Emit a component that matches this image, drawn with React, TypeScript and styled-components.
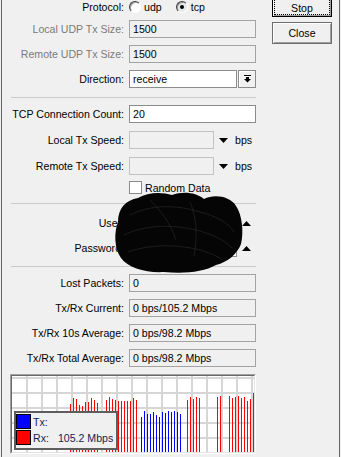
import styled, { createGlobalStyle } from 'styled-components';

const GlobalStyle = createGlobalStyle`
  html, body {
    margin: 0;
    padding: 0;
    background: #f0f0f0;
  }
  body {
    font-family: "Liberation Sans", Arial, sans-serif;
    font-size: 10.6px;
    color: #000;
  }
  * { box-sizing: border-box; }
`;

const Frame = styled.div`
  position: relative;
  width: 341px;
  height: 457px;
  padding: 0 1px;
  overflow: hidden;
  background: #f0f0f0;
`;

const Window = styled.div`
  height: 100%;
  display: flex;
  border-left: 1px solid #646464;
  border-right: 1px solid #646464;
`;

const MainPanel = styled.div`
  width: 246px;
  margin-left: 8px;
  display: flex;
  flex-direction: column;
`;

const Section = styled.div<{ $gap: number }>`
  display: flex;
  flex-direction: column;
  gap: ${p => p.$gap}px;
`;

const Separator = styled.div<{ $top: number; $bottom: number }>`
  height: 1px;
  margin: ${p => p.$top}px 0 ${p => p.$bottom}px 1px;
  background: #cacaca;
`;

const Row = styled.div<{ $h?: number }>`
  display: grid;
  grid-template-columns: 114px 1fr;
  column-gap: 5px;
  align-items: center;
  height: ${p => p.$h ?? 18}px;
`;

const Label = styled.span<{ $disabled?: boolean }>`
  text-align: right;
  white-space: nowrap;
  color: ${p => (p.$disabled ? '#7a7a7a' : '#000')};
`;

const Controls = styled.div<{ $gap?: number }>`
  display: flex;
  align-items: center;
  gap: ${p => p.$gap ?? 4}px;
`;

type FieldKind = 'edit' | 'readonly' | 'disabled';

const fieldColors: Record<FieldKind, { bg: string; border: string }> = {
  edit: { bg: '#ffffff', border: '#8c8c8c' },
  readonly: { bg: '#f0f0f0', border: '#a3a3a3' },
  disabled: { bg: '#f0f0f0', border: '#c2c2c2' },
};

const Field = styled.div<{ $kind: FieldKind; $width?: number }>`
  width: ${p => (p.$width ? `${p.$width}px` : '100%')};
  height: 18px;
  padding: 0 3px;
  display: flex;
  align-items: center;
  white-space: nowrap;
  background: ${p => fieldColors[p.$kind].bg};
  border: 1px solid ${p => fieldColors[p.$kind].border};
`;

const DropButton = styled.div`
  width: 18px;
  height: 18px;
  display: flex;
  align-items: center;
  justify-content: center;
  background: #f0f0f0;
  border: 1px solid #8a8a8a;
  box-shadow: inset 1px 1px #fff;
`;

const Radio = styled.span<{ $checked?: boolean }>`
  width: 12px;
  height: 12px;
  border-radius: 50%;
  display: inline-flex;
  align-items: center;
  justify-content: center;
  border: 1px solid;
  border-color: #3c3c3c #ffffff #ffffff #3c3c3c;
  background: ${p => (p.$checked ? '#e8e8e8' : '#fff')};
  box-shadow: inset 1px 1px #a0a0a0;
  &::after {
    content: '';
    width: 4px;
    height: 4px;
    border-radius: 50%;
    background: ${p => (p.$checked ? '#000' : 'transparent')};
  }
`;

const RadioText = styled.span`
  margin: 0 14px 0 3px;
`;

const CheckRow = styled(Row)`
  margin-top: -2px;
`;

const CheckBox = styled.span`
  width: 13px;
  height: 13px;
  background: #fff;
  border: 1px solid #8a8a8a;
`;

const Unit = styled.span`
  margin-left: 2px;
`;

const ButtonColumn = styled.div`
  width: 60px;
  margin: -5px 0 0 16px;
  display: flex;
  flex-direction: column;
  gap: 5px;
`;

const Button = styled.div<{ $default?: boolean }>`
  position: relative;
  height: 22px;
  padding-top: ${p => (p.$default ? 3 : 0)}px;
  display: flex;
  align-items: center;
  justify-content: center;
  background: #f0f0f0;
  border: 1px solid ${p => (p.$default ? '#000' : '#6e6e6e')};
  box-shadow: inset 1px 1px #fff, inset -1px -1px #a0a0a0;
  &::after {
    content: '';
    display: ${p => (p.$default ? 'block' : 'none')};
    position: absolute;
    inset: 1px;
    border: 1px dotted #000;
  }
`;

const Graph = styled.div`
  margin-top: 7px;
  width: 246px;
  height: 80px;
  border: 1px solid;
  border-color: #a0a0a0 #ffffff #ffffff #a0a0a0;
`;

const GraphInner = styled.div`
  position: relative;
  width: 100%;
  height: 100%;
  background: #fff;
  border: 1px solid;
  border-color: #696969 #e3e3e3 #e3e3e3 #696969;
  overflow: hidden;
`;

const Legend = styled.div`
  position: absolute;
  left: 2px;
  top: 35px;
  width: 104px;
  height: 39px;
  padding: 1px 0 0 0;
  display: flex;
  flex-direction: column;
  gap: 1px;
  background: #f0f0f0;
  border: 2px solid #5e5e5e;
`;

const LegendRow = styled.div`
  height: 15px;
  display: flex;
  align-items: center;
  gap: 2px;
  color: #1a1a50;
`;

const Swatch = styled.span<{ $color: string }>`
  width: 15px;
  height: 15px;
  background: ${p => p.$color};
  border: 1px solid #000;
`;

const LegendValue = styled.span`
  margin-left: 7px;
`;

const Scribble = styled.svg`
  position: absolute;
  left: 110px;
  top: 188px;
`;

const DownTriangle = () => (
  <svg width="9" height="5" viewBox="0 0 9 5">
    <polygon points="0,0 9,0 4.5,5" fill="#000" />
  </svg>
);

const UpTriangle = () => (
  <svg width="9" height="5" viewBox="0 0 9 5">
    <polygon points="0,5 9,5 4.5,0" fill="#000" />
  </svg>
);

const DropIcon = () => (
  <svg width="7" height="8" viewBox="0 0 7 8">
    <rect x="0" y="0" width="7" height="1" fill="#000" />
    <rect x="2" y="2" width="3" height="2" fill="#000" />
    <polygon points="0,4 7,4 3.5,7.5" fill="#000" />
  </svg>
);

type BarGroup = { x: number; tops: number[]; color: string };

const barGroups: BarGroup[] = [
  { x: 70, tops: [404, 398, 399, 405, 406, 402, 402, 398, 400, 403], color: '#ff0000' },
  { x: 106, tops: [400, 397, 399, 400, 401, 401, 401, 401, 401, 398, 400], color: '#ff0000' },
  { x: 141, tops: [417, 411, 414, 414, 412, 415, 417, 412, 413, 411, 412, 411, 412, 414], color: '#0000ff' },
  { x: 187, tops: [400, 397, 399, 397, 398], color: '#ff0000' },
  { x: 217, tops: [397, 396], color: '#ff0000' },
  { x: 229, tops: [396, 398, 397, 396, 398, 397, 401, 399, 393], color: '#ff0000' },
];

// graph inner area starts at page (12, 376)
const OX = 12;
const OY = 376;

const Chart = () => (
  <svg width="242" height="76" viewBox="0 0 242 76">
    {Array.from({ length: 16 }, (_, k) => (
      <rect key={`v${k}`} x={14 + 15 * k} y={0} width={2} height={76} fill="#d6d6d6" />
    ))}
    {Array.from({ length: 5 }, (_, k) => (
      <rect key={`h${k}`} x={0} y={1 + 15 * k} width={242} height={2} fill="#d6d6d6" />
    ))}
    {barGroups.map(g =>
      g.tops.map((top, i) => (
        <rect
          key={`${g.x}-${i}`}
          x={g.x + 3 * i - OX}
          y={top - OY}
          width={1}
          height={76 - (top - OY)}
          fill={g.color}
        />
      ))
    )}
  </svg>
);

const App = () => {
  return (
    <Frame>
      <GlobalStyle />
      <Window>
        <MainPanel>
          <Section $gap={7}>
            <Row $h={13}>
              <Label>Protocol:</Label>
              <Controls $gap={0}>
                <Radio />
                <RadioText>udp</RadioText>
                <Radio $checked />
                <RadioText>tcp</RadioText>
              </Controls>
            </Row>
            <Row>
              <Label $disabled>Local UDP Tx Size:</Label>
              <Field $kind="readonly">1500</Field>
            </Row>
            <Row>
              <Label $disabled>Remote UDP Tx Size:</Label>
              <Field $kind="readonly">1500</Field>
            </Row>
            <Row>
              <Label>Direction:</Label>
              <Controls $gap={1}>
                <Field $kind="edit" $width={108}>receive</Field>
                <DropButton>
                  <DropIcon />
                </DropButton>
              </Controls>
            </Row>
          </Section>

          <Separator $top={9} $bottom={7} />

          <Section $gap={8}>
            <Row>
              <Label>TCP Connection Count:</Label>
              <Field $kind="edit">20</Field>
            </Row>
            <Row>
              <Label>Local Tx Speed:</Label>
              <Controls $gap={5}>
                <Field $kind="disabled" $width={85} />
                <DownTriangle />
                <Unit>bps</Unit>
              </Controls>
            </Row>
            <Row>
              <Label>Remote Tx Speed:</Label>
              <Controls $gap={5}>
                <Field $kind="disabled" $width={85} />
                <DownTriangle />
                <Unit>bps</Unit>
              </Controls>
            </Row>
            <CheckRow $h={13}>
              <span />
              <Controls $gap={3}>
                <CheckBox />
                <span>Random Data</span>
              </Controls>
            </CheckRow>
          </Section>

          <Separator $top={9} $bottom={10} />

          <Section $gap={7}>
            <Row>
              <Label>User:</Label>
              <Controls $gap={5}>
                <Field $kind="edit" $width={108} />
                <UpTriangle />
              </Controls>
            </Row>
            <Row>
              <Label>Password:</Label>
              <Controls $gap={5}>
                <Field $kind="edit" $width={108} />
                <UpTriangle />
              </Controls>
            </Row>
          </Section>

          <Separator $top={9} $bottom={7} />

          <Section $gap={7}>
            <Row>
              <Label>Lost Packets:</Label>
              <Field $kind="readonly">0</Field>
            </Row>
            <Row>
              <Label>Tx/Rx Current:</Label>
              <Field $kind="readonly">0 bps/105.2 Mbps</Field>
            </Row>
            <Row>
              <Label>Tx/Rx 10s Average:</Label>
              <Field $kind="readonly">0 bps/98.2 Mbps</Field>
            </Row>
            <Row>
              <Label>Tx/Rx Total Average:</Label>
              <Field $kind="readonly">0 bps/98.2 Mbps</Field>
            </Row>
          </Section>

          <Graph>
            <GraphInner>
              <Chart />
              <Legend>
                <LegendRow>
                  <Swatch $color="#0000ff" />
                  <span>Tx:</span>
                </LegendRow>
                <LegendRow>
                  <Swatch $color="#ff0000" />
                  <span>Rx:</span>
                  <LegendValue>105.2 Mbps</LegendValue>
                </LegendRow>
              </Legend>
            </GraphInner>
          </Graph>
        </MainPanel>

        <ButtonColumn>
          <Button $default>Stop</Button>
          <Button>Close</Button>
        </ButtonColumn>
      </Window>

      <Scribble width="140" height="90" viewBox="110 188 140 90">
        <path
          d="M118 222 C118 208 126 200 138 198 C148 192 162 192 172 195 C182 191 196 192 204 199 C214 194 230 196 236 206 C242 214 244 232 241 244 C237 254 228 262 216 265 C204 272 184 274 164 272 C146 273 128 268 121 258 C114 248 114 232 118 222 Z"
          fill="#050505"
        />
        <g fill="none" stroke="#2b2b2b" strokeWidth="0.6">
          <path d="M130 215 C150 205 175 204 200 212 C215 216 228 222 234 232" />
          <path d="M124 235 C145 225 170 224 196 230 C212 234 224 240 232 248" />
          <path d="M128 252 C150 244 176 244 200 250 C210 253 218 256 222 260" />
          <path d="M150 200 C160 210 170 222 176 240" />
          <path d="M190 202 C196 216 198 232 194 256" />
        </g>
      </Scribble>
    </Frame>
  );
};

export default App;
